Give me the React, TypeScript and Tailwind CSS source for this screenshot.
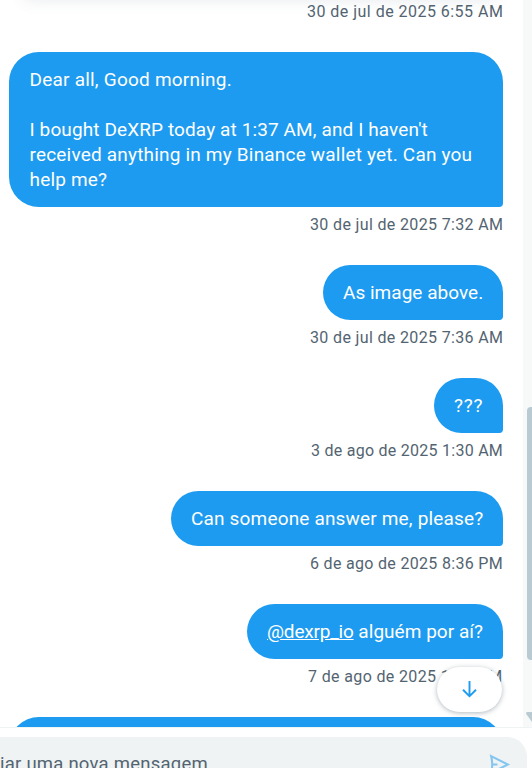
import clsx from "clsx";

interface Line {
  text: string;
  className?: string;
}

interface Message {
  id: number;
  lines: Line[];
  mention?: string;
  time: string;
  bubbleClass: string;
  timeClass: string;
}

const messages: Message[] = [
  {
    id: 1,
    lines: [
      { text: "Dear all, Good morning.", className: "tracking-[0.22px]" },
      { text: "" },
      {
        text: "I bought DeXRP today at 1:37 AM, and I haven't",
        className: "tracking-[0.11px]",
      },
      {
        text: "received anything in my Binance wallet yet. Can you",
        className: "tracking-[0.19px]",
      },
      { text: "help me?" },
    ],
    time: "30 de jul de 2025 7:32 AM",
    bubbleClass: "w-[494px] pl-[20.5px]",
    timeClass: "w-[193px] tracking-[0.35px]",
  },
  {
    id: 2,
    lines: [{ text: "As image above.", className: "tracking-[0.02px]" }],
    time: "30 de jul de 2025 7:36 AM",
    bubbleClass: "w-[180px] pl-5",
    timeClass: "w-[193px] tracking-[0.35px]",
  },
  {
    id: 3,
    lines: [{ text: "???", className: "tracking-[0.8px]" }],
    time: "3 de ago de 2025 1:30 AM",
    bubbleClass: "w-[69px] pl-5",
    timeClass: "w-[192px] tracking-[0.26px]",
  },
  {
    id: 4,
    lines: [{ text: "Can someone answer me, please?" }],
    time: "6 de ago de 2025 8:36 PM",
    bubbleClass: "w-[332px] pl-5",
    timeClass: "w-[193px] tracking-[0.31px]",
  },
  {
    id: 5,
    mention: "@dexrp_io",
    lines: [{ text: " alguém por aí?", className: "tracking-[0.03px]" }],
    time: "7 de ago de 2025 1:42 AM",
    bubbleClass: "w-[256px] pl-5",
    timeClass: "w-[195px] tracking-[0.36px]",
  },
];

function Timestamp({ time, className }: { time: string; className?: string }) {
  return (
    <div
      className={clsx(
        "text-[16px] leading-5 whitespace-nowrap text-[#536471]",
        className
      )}
    >
      {time}
    </div>
  );
}

function Bubble({ message }: { message: Message }) {
  return (
    <div className="flex flex-col items-end">
      <div
        className={clsx(
          "rounded-[30px] rounded-br-[4px] bg-[#1d9bf0] py-[15px] text-[19px] leading-[25px] whitespace-pre text-white",
          message.bubbleClass
        )}
      >
        {message.lines.map((line, i) => (
          <div
            key={i}
            className={clsx("h-[25px]", line.className ?? "tracking-[0.17px]")}
          >
            {i === 0 && message.mention && (
              <span className="tracking-[-0.2px] underline">
                {message.mention}
              </span>
            )}
            {line.text}
          </div>
        ))}
      </div>
      <Timestamp
        time={message.time}
        className={clsx("mt-2 mb-[30px]", message.timeClass)}
      />
    </div>
  );
}

function Scrollbar() {
  return (
    <div className="flex w-[9px] shrink-0 flex-col items-end bg-[#f7f9f9] pt-[407px]">
      <div className="h-[253px] w-[5px] rounded-l-[4px] bg-[#b9cad3]" />
      <svg
        className="mt-[52px] h-[11px] w-[6px]"
        viewBox="0 0 6 11"
        fill="#b9cad3"
      >
        <path d="M1 0H6V10L0.2 2Q-.3 .5 1 0Z" />
      </svg>
    </div>
  );
}

function Composer() {
  return (
    <div className="h-[41px] border-t border-[#eff3f4] bg-white pt-[9px]">
      <div className="flex h-14 w-[527px] items-start justify-between rounded-tr-[20px] bg-[#eff3f4] pt-[15px] pr-[15px]">
        <span className="text-[18.5px] leading-[25px] tracking-[0.24px] whitespace-nowrap text-[#536471]">
          iar uma nova mensagem
        </span>
        <svg
          className="h-[25px] w-[25px] opacity-50"
          viewBox="0 0 24 24"
          fill="#1d9bf0"
        >
          <path d="M2.504 21.866l.526-2.108C3.04 19.719 4 15.823 4 12s-.96-7.719-.97-7.757l-.527-2.109L22.236 12 2.504 21.866zM5.981 13c-.072 1.962-.34 3.833-.583 5.183L17.764 12 5.398 5.818c.242 1.349.51 3.221.583 5.183H10v2H5.981z" />
        </svg>
      </div>
    </div>
  );
}

export default function App() {
  return (
    <div className="flex h-[768px] w-[532px] flex-col overflow-hidden bg-white font-[Roboto,sans-serif]">
      <div className="relative flex h-[727px] shrink-0 overflow-hidden">
        <div className="flex min-w-0 flex-1 flex-col items-end pt-[2px] pr-5">
          <Timestamp
            time="30 de jul de 2025 6:55 AM"
            className="mb-[30px] w-[196px] tracking-[0.47px]"
          />
          {messages.map((message) => (
            <Bubble key={message.id} message={message} />
          ))}
          <div className="h-[80px] w-[494px] shrink-0 rounded-[30px] bg-[#1d9bf0]" />
        </div>
        <Scrollbar />

        {/* Shadow cast by the card scrolled off the top */}
        <div className="absolute -top-5 left-6 h-5 w-[472px] shadow-[0_0_15px_rgba(101,119,134,0.15)]" />

        {/* Scroll to latest */}
        <button className="absolute top-[667px] left-[437px] flex h-[45px] w-[65px] items-center justify-center rounded-full bg-white shadow-[0_1px_5px_rgba(83,100,113,0.45)]">
          <svg className="h-[23px] w-[23px]" viewBox="0 0 24 24" fill="#1d9bf0">
            <path d="M13 3v13.59l5.043-5.05 1.414 1.42L12 20.41l-7.457-7.45 1.414-1.42L11 16.59V3h2z" />
          </svg>
        </button>
      </div>
      <Composer />
    </div>
  );
}
